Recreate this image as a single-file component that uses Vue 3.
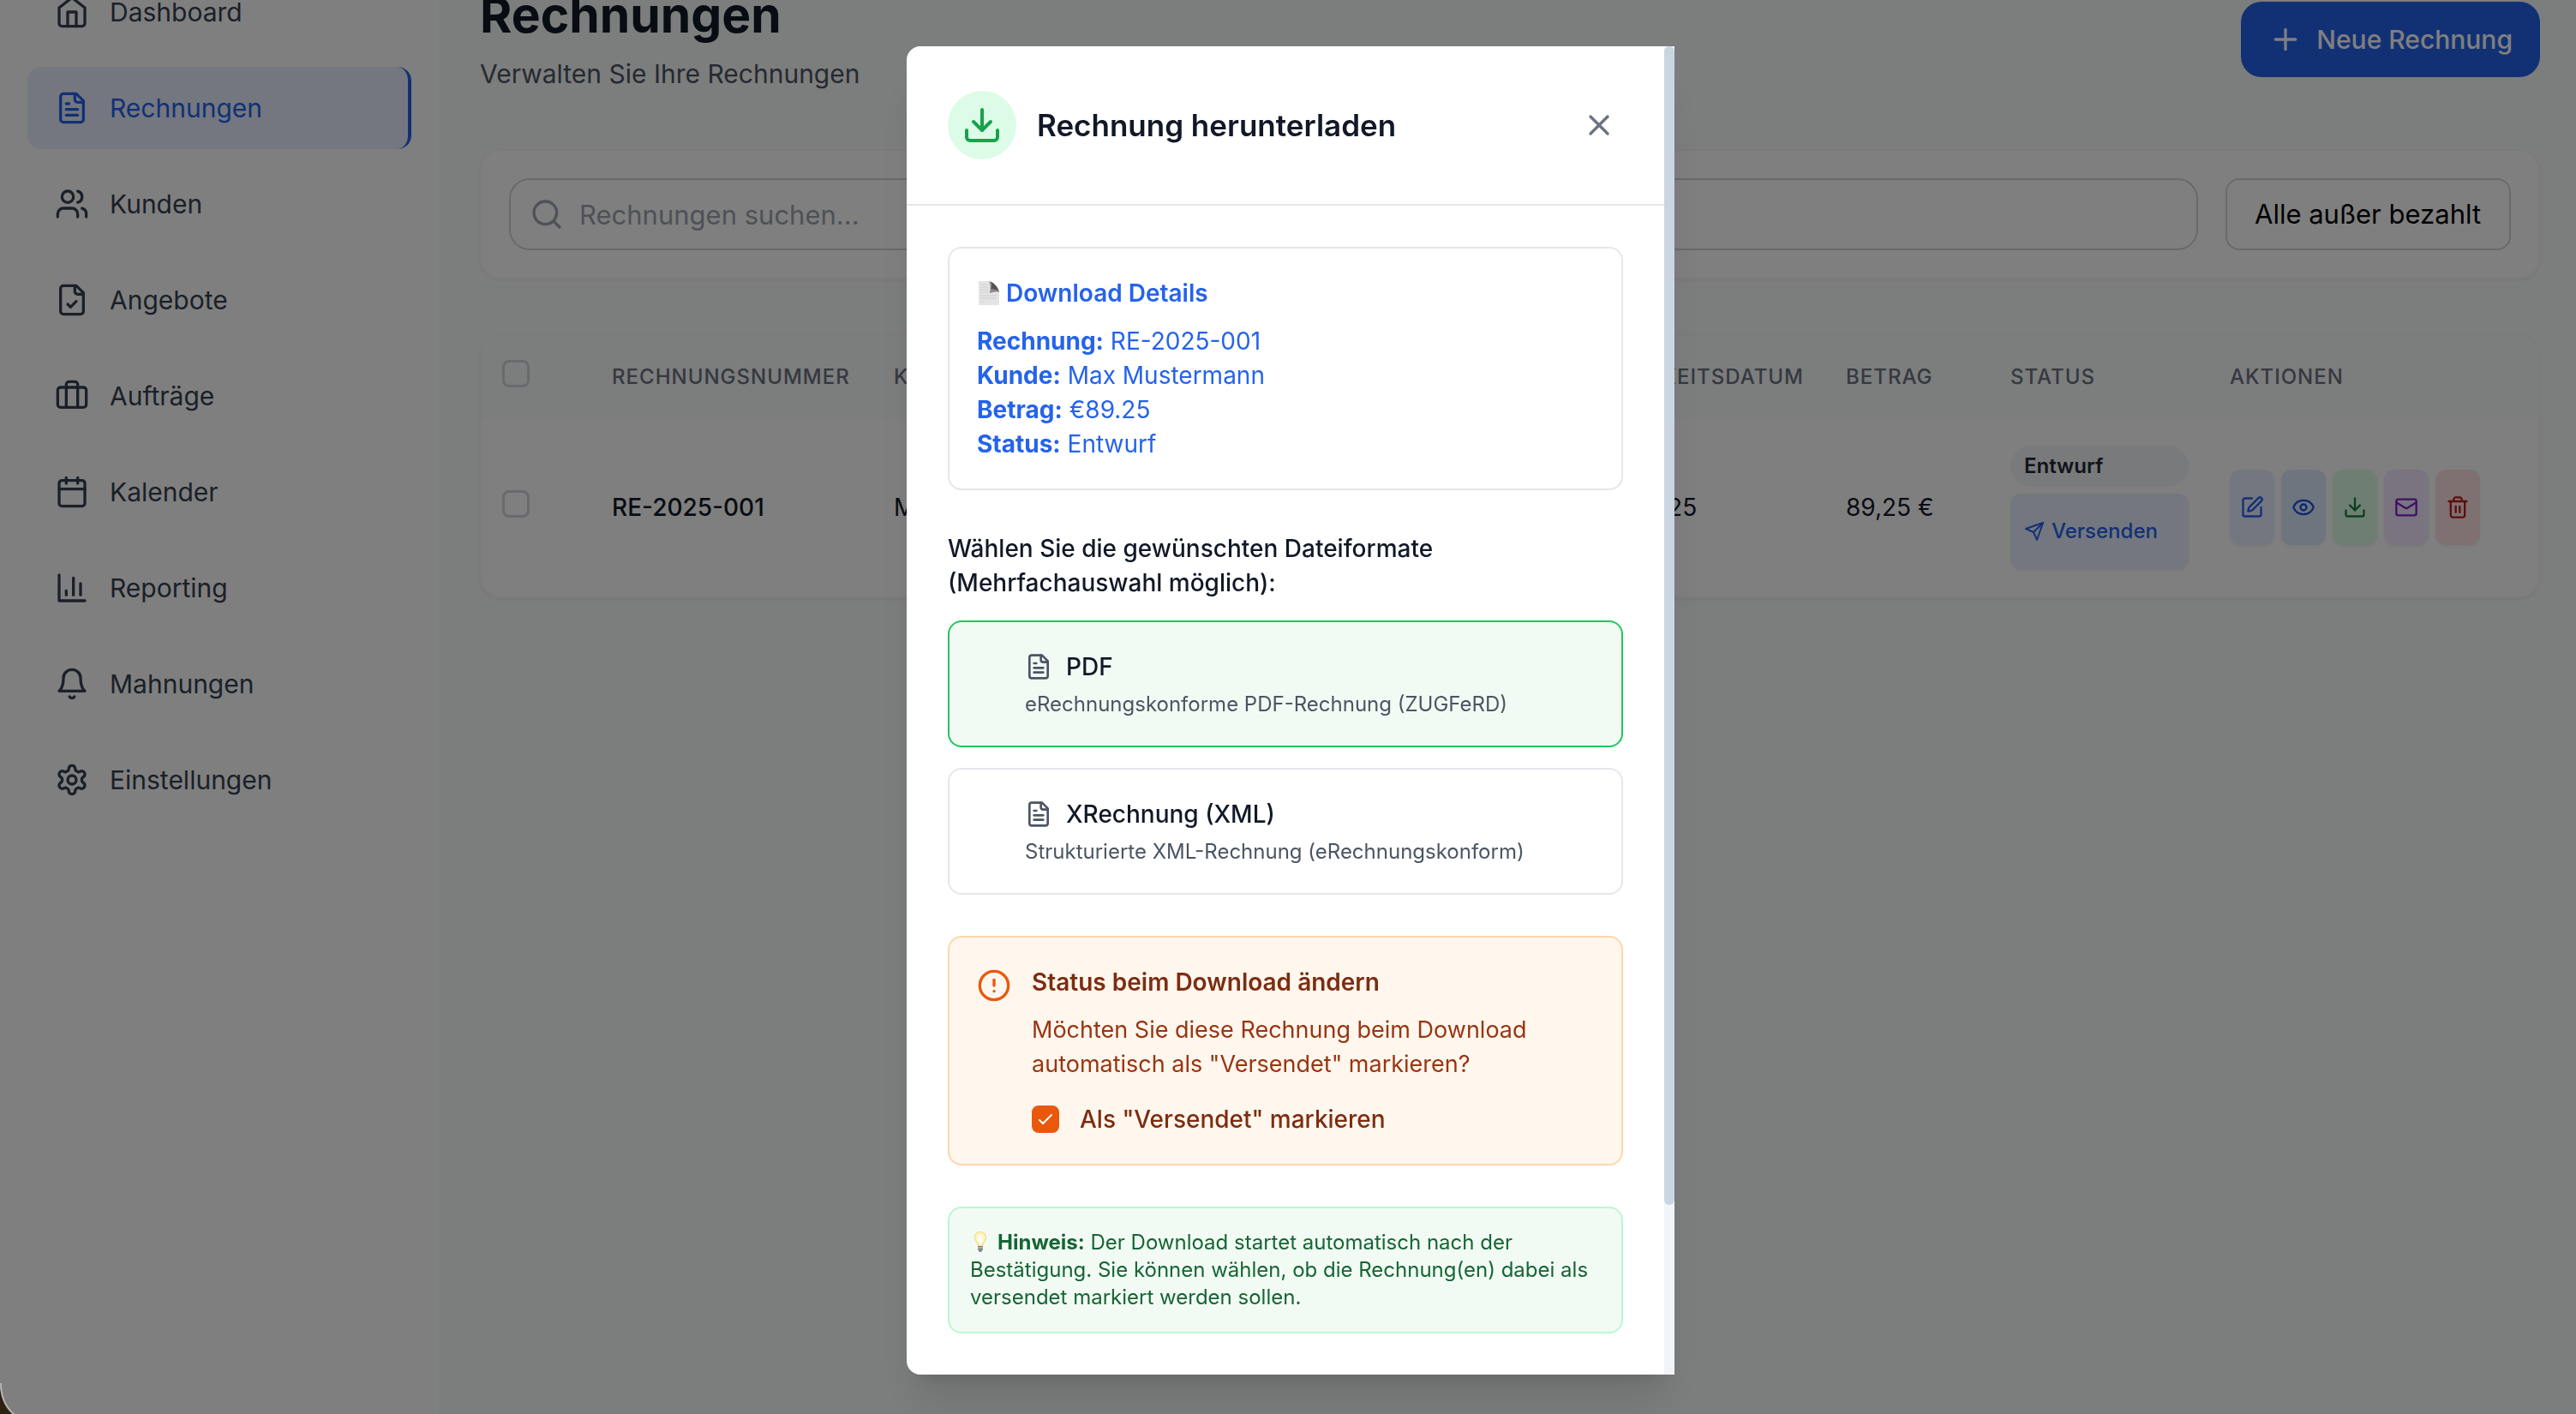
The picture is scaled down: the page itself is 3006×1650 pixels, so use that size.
<script setup>
import { h, ref } from 'vue'

const filePaths = [
  'M15 2H6a2 2 0 0 0-2 2v16a2 2 0 0 0 2 2h12a2 2 0 0 0 2-2V7Z',
  'M14 2v4a2 2 0 0 0 2 2h4',
]

const icons = {
  home: ['m3 9 9-7 9 7v11a2 2 0 0 1-2 2H5a2 2 0 0 1-2-2z', 'M9 22V12h6v10'],
  file: [...filePaths, 'M10 9H8', 'M16 13H8', 'M16 17H8'],
  users: [
    'M16 21v-2a4 4 0 0 0-4-4H6a4 4 0 0 0-4 4v2',
    'M5 7a4 4 0 1 0 8 0a4 4 0 1 0-8 0',
    'M22 21v-2a4 4 0 0 0-3-3.87',
    'M16 3.13a4 4 0 0 1 0 7.75',
  ],
  fileCheck: [...filePaths, 'm9 15 2 2 4-4'],
  briefcase: [
    'M16 20V4a2 2 0 0 0-2-2h-4a2 2 0 0 0-2 2v16',
    'M4 6h16a2 2 0 0 1 2 2v10a2 2 0 0 1-2 2H4a2 2 0 0 1-2-2V8a2 2 0 0 1 2-2z',
  ],
  calendar: [
    'M8 2v4',
    'M16 2v4',
    'M5 4h14a2 2 0 0 1 2 2v14a2 2 0 0 1-2 2H5a2 2 0 0 1-2-2V6a2 2 0 0 1 2-2z',
    'M3 10h18',
  ],
  chart: ['M3 3v18h18', 'M18 17V9', 'M13 17V5', 'M8 17v-3'],
  bell: ['M6 8a6 6 0 0 1 12 0c0 7 3 9 3 9H3s3-2 3-9', 'M10.3 21a1.94 1.94 0 0 0 3.4 0'],
  settings: [
    'M12.22 2h-.44a2 2 0 0 0-2 2v.18a2 2 0 0 1-1 1.73l-.43.25a2 2 0 0 1-2 0l-.15-.08a2 2 0 0 0-2.73.73l-.22.38a2 2 0 0 0 .73 2.73l.15.1a2 2 0 0 1 1 1.72v.51a2 2 0 0 1-1 1.74l-.15.09a2 2 0 0 0-.73 2.73l.22.38a2 2 0 0 0 2.73.73l.15-.08a2 2 0 0 1 2 0l.43.25a2 2 0 0 1 1 1.73V20a2 2 0 0 0 2 2h.44a2 2 0 0 0 2-2v-.18a2 2 0 0 1 1-1.73l.43-.25a2 2 0 0 1 2 0l.15.08a2 2 0 0 0 2.73-.73l.22-.39a2 2 0 0 0-.73-2.73l-.15-.08a2 2 0 0 1-1-1.74v-.5a2 2 0 0 1 1-1.74l.15-.09a2 2 0 0 0 .73-2.73l-.22-.38a2 2 0 0 0-2.73-.73l-.15.08a2 2 0 0 1-2 0l-.43-.25a2 2 0 0 1-1-1.73V4a2 2 0 0 0-2-2z',
    'M9 12a3 3 0 1 0 6 0a3 3 0 1 0-6 0',
  ],
  plus: ['M5 12h14', 'M12 5v14'],
  search: ['M3 11a8 8 0 1 0 16 0a8 8 0 1 0-16 0', 'm21 21-4.3-4.3'],
  send: ['m22 2-7 20-4-9-9-4Z', 'M22 2 11 13'],
  edit: [
    'M12 3H5a2 2 0 0 0-2 2v14a2 2 0 0 0 2 2h14a2 2 0 0 0 2-2v-7',
    'M18.375 2.625a1 1 0 0 1 3 3l-9.013 9.014a2 2 0 0 1-.853.505l-2.873.84a.5.5 0 0 1-.62-.62l.84-2.873a2 2 0 0 1 .506-.852z',
  ],
  eye: [
    'M2.062 12.348a1 1 0 0 1 0-.696 10.75 10.75 0 0 1 19.876 0 1 1 0 0 1 0 .696 10.75 10.75 0 0 1-19.876 0',
    'M9 12a3 3 0 1 0 6 0a3 3 0 1 0-6 0',
  ],
  download: ['M21 15v4a2 2 0 0 1-2 2H5a2 2 0 0 1-2-2v-4', 'm7 10 5 5 5-5', 'M12 15V3'],
  mail: [
    'M4 4h16a2 2 0 0 1 2 2v12a2 2 0 0 1-2 2H4a2 2 0 0 1-2-2V6a2 2 0 0 1 2-2z',
    'm22 7-8.97 5.7a1.94 1.94 0 0 1-2.06 0L2 7',
  ],
  trash: [
    'M3 6h18',
    'M19 6v14c0 1-1 2-2 2H7c-1 0-2-1-2-2V6',
    'M8 6V4c0-1 1-2 2-2h4c1 0 2 1 2 2v2',
    'M10 11v6',
    'M14 11v6',
  ],
  close: ['M18 6 6 18', 'm6 6 12 12'],
  alert: ['M2 12a10 10 0 1 0 20 0a10 10 0 1 0-20 0', 'M12 8v4', 'M12 16h.01'],
}

const Icon = (props) =>
  h(
    'svg',
    {
      viewBox: '0 0 24 24',
      fill: 'none',
      stroke: 'currentColor',
      'stroke-width': 2,
      'stroke-linecap': 'round',
      'stroke-linejoin': 'round',
      'aria-hidden': 'true',
    },
    icons[props.name].map((d) => h('path', { d })),
  )

const navItems = [
  { label: 'Dashboard', icon: 'home' },
  { label: 'Rechnungen', icon: 'file', active: true },
  { label: 'Kunden', icon: 'users' },
  { label: 'Angebote', icon: 'fileCheck' },
  { label: 'Aufträge', icon: 'briefcase' },
  { label: 'Kalender', icon: 'calendar' },
  { label: 'Reporting', icon: 'chart' },
  { label: 'Mahnungen', icon: 'bell' },
  { label: 'Einstellungen', icon: 'settings' },
]

const rowActions = [
  { label: 'Bearbeiten', icon: 'edit' },
  { label: 'Ansehen', icon: 'eye' },
  { label: 'Herunterladen', icon: 'download' },
  { label: 'E-Mail', icon: 'mail' },
  { label: 'Löschen', icon: 'trash' },
]

const details = [
  ['Rechnung:', 'RE-2025-001'],
  ['Kunde:', 'Max Mustermann'],
  ['Betrag:', '€89.25'],
  ['Status:', 'Entwurf'],
]

const formats = ref([
  { id: 'pdf', name: 'PDF', text: 'eRechnungskonforme PDF-Rechnung (ZUGFeRD)', checked: true },
  { id: 'xml', name: 'XRechnung (XML)', text: 'Strukturierte XML-Rechnung (eRechnungskonform)', checked: false },
])
const markSent = ref(true)
</script>

<template>
  <div class="shell">
    <aside class="sidebar">
      <nav class="nav" aria-label="Hauptmenü">
        <a
          v-for="item in navItems"
          :key="item.label"
          href="#"
          class="nav-item"
          :class="{ active: item.active }"
        >
          <Icon :name="item.icon" class="icon-40" />
          <span>{{ item.label }}</span>
        </a>
      </nav>
    </aside>

    <main class="main">
      <header class="page-head">
        <div>
          <h1>Rechnungen</h1>
          <p>Verwalten Sie Ihre Rechnungen</p>
        </div>
        <button type="button" class="new-button">
          <Icon name="plus" class="icon-40" />
          <span>Neue Rechnung</span>
        </button>
      </header>

      <section class="filters">
        <div class="search">
          <Icon name="search" class="icon-40 search-icon" />
          <input type="text" placeholder="Rechnungen suchen..." aria-label="Rechnungen suchen" />
        </div>
        <select class="status-filter" aria-label="Statusfilter">
          <option>Alle außer bezahlt</option>
        </select>
      </section>

      <section class="table-card">
        <table>
          <colgroup>
            <col class="col-check" />
            <col class="col-number" />
            <col class="col-customer" />
            <col class="col-date" />
            <col class="col-due" />
            <col class="col-amount" />
            <col class="col-status" />
            <col class="col-actions" />
          </colgroup>
          <thead>
            <tr>
              <th><input type="checkbox" class="row-check" aria-label="Alle auswählen" /></th>
              <th>Rechnungsnummer</th>
              <th>Kunde</th>
              <th>Datum</th>
              <th>Fälligkeitsdatum</th>
              <th>Betrag</th>
              <th>Status</th>
              <th>Aktionen</th>
            </tr>
          </thead>
          <tbody>
            <tr>
              <td><input type="checkbox" class="row-check" aria-label="RE-2025-001 auswählen" /></td>
              <td class="number">RE-2025-001</td>
              <td>Max Mustermann</td>
              <td>1.10.2025</td>
              <td>5.10.2025</td>
              <td>89,25 €</td>
              <td>
                <div class="status">
                  <span class="badge">Entwurf</span>
                  <button type="button" class="send-button">
                    <Icon name="send" class="icon-24" />
                    <span>Versenden</span>
                  </button>
                </div>
              </td>
              <td>
                <div class="actions">
                  <button
                    v-for="action in rowActions"
                    :key="action.icon"
                    type="button"
                    class="action"
                    :class="action.icon"
                    :aria-label="action.label"
                  >
                    <Icon :name="action.icon" class="icon-28" />
                  </button>
                </div>
              </td>
            </tr>
          </tbody>
        </table>
      </section>
    </main>
  </div>

  <div class="overlay">
    <div class="modal" role="dialog" aria-modal="true" aria-labelledby="modal-title">
      <div class="modal-content">
        <header class="modal-head">
          <span class="modal-icon"><Icon name="download" class="icon-48" /></span>
          <h2 id="modal-title">Rechnung herunterladen</h2>
          <button type="button" class="close" aria-label="Schließen">
            <Icon name="close" class="icon-40" />
          </button>
        </header>

        <div class="modal-body">
          <section class="details">
            <h3>
              <svg class="page-emoji" viewBox="0 0 24 28" aria-hidden="true">
                <path d="M0 0h13l11 13v15H0z" fill="#e4e4e4" />
                <path d="M2 4h9M2 7h9M2 10h10M2 13h12M2 17h19M2 20h19M2 24h5" stroke="#d0d0d0" />
                <path d="M12 0c3 2 3 5 2 9c4-1 8 0 10 4c-3-1-8 0-11 1c1-5 1-10-1-14z" fill="#8a8a8a" />
                <path d="M13 0c5 2 10 7 11 13c-2-3-6-4-10-4c1-4 1-7-1-9z" fill="#555" />
              </svg>
              <span>Download Details</span>
            </h3>
            <p v-for="[label, value] in details" :key="label">
              <strong>{{ label }}</strong> {{ value }}
            </p>
          </section>

          <fieldset class="formats">
            <legend>Wählen Sie die gewünschten Dateiformate (Mehrfachauswahl möglich):</legend>
            <label
              v-for="format in formats"
              :key="format.id"
              class="format"
              :class="{ selected: format.checked }"
            >
              <input v-model="format.checked" type="checkbox" class="format-check" />
              <span class="format-text">
                <span class="format-name">
                  <Icon name="file" class="icon-32" />
                  <span>{{ format.name }}</span>
                </span>
                <span class="format-info">{{ format.text }}</span>
              </span>
            </label>
          </fieldset>

          <section class="notice">
            <Icon name="alert" class="icon-40 notice-icon" />
            <div class="notice-text">
              <h3>Status beim Download ändern</h3>
              <p>Möchten Sie diese Rechnung beim Download automatisch als "Versendet" markieren?</p>
              <label>
                <span class="tick">
                  <input v-model="markSent" type="checkbox" />
                  <svg viewBox="0 0 32 32" aria-hidden="true">
                    <path d="M9 17l4 4 10-10" />
                  </svg>
                </span>
                <span>Als "Versendet" markieren</span>
              </label>
            </div>
          </section>

          <p class="hint">
            <svg class="bulb" viewBox="0 0 24 24" aria-hidden="true">
              <path d="M12 0c-4 0-7 3-7 7c0 4 3 5 4 10h6c1-5 4-6 4-10c0-4-3-7-7-7z" fill="#f3d98a" />
              <path d="M12 1c-3 0-6 3-6 6c0 3 3 5 4 9h4c1-4 4-6 4-9c0-3-3-6-6-6z" fill="#fff3bf" />
              <path d="M12 4c-2 0-3 2-3 4c0 2 1 4 2 6h2c1-2 2-4 2-6c0-2-1-4-3-4z" fill="#fffdf2" />
              <path d="M9 17h6v4l-2 3h-2l-2-3z" fill="#85858a" />
              <path d="M9 19h6" stroke="#cfcfd2" />
            </svg>
            <strong>Hinweis:</strong> Der Download startet automatisch nach der Bestätigung. Sie
            können wählen, ob die Rechnung(en) dabei als versendet markiert werden sollen.
          </p>
        </div>
      </div>
      <div class="scroll-track" aria-hidden="true"><div class="scroll-thumb"></div></div>
    </div>
  </div>

  <svg class="window-corner" viewBox="0 0 20 36" aria-hidden="true">
    <path d="M0 0C0 16 6 28 17 36H0z" fill="#2c2410" />
    <path d="M1 0C1 16 6 28 17 37" fill="none" stroke="#b4b4b4" stroke-width="2" />
  </svg>
</template>

<style>
html,
body {
  margin: 0;
  background: #f9fbfa;
  overflow: hidden;
}
</style>

<style scoped>
.shell,
.overlay {
  font-family: Inter, "Liberation Sans", sans-serif;
  font-size: 28px;
  line-height: 40px;
  color: #111827;
}

.shell *,
.overlay * {
  box-sizing: border-box;
}

.shell {
  display: flex;
  min-height: 100vh;
  background: #f9fbfa;
}

h1,
h2,
h3,
p {
  margin: 0;
}

button,
input,
select {
  font: inherit;
  color: inherit;
  margin: 0;
}

button {
  border: 0;
  padding: 0;
  display: flex;
  align-items: center;
}

svg {
  flex: none;
}

.icon-24 {
  width: 24px;
  height: 24px;
}

.icon-28 {
  width: 28px;
  height: 28px;
}

.icon-32 {
  width: 32px;
  height: 32px;
}

.icon-40 {
  width: 40px;
  height: 40px;
}

.icon-48 {
  width: 48px;
  height: 48px;
}

/* Sidebar */
.sidebar {
  flex: none;
  width: 512px;
  padding: 0 32px;
  background: #fff;
}

.nav {
  display: flex;
  flex-direction: column;
  gap: 16px;
  margin-top: -34px;
}

.nav-item {
  display: flex;
  align-items: center;
  gap: 24px;
  height: 96px;
  padding: 0 32px;
  border-radius: 16px;
  color: #374151;
  font-size: 30px;
  text-decoration: none;
}

.nav-item.active {
  color: #2563eb;
  background: #e8eeff;
  border-right: 4px solid #2563eb;
}

/* Page */
.main {
  flex: 1;
  min-width: 0;
  padding: 0 42px 0 48px;
}

.page-head {
  display: flex;
  justify-content: space-between;
  align-items: flex-start;
  height: 174px;
}

.page-head h1 {
  margin-top: -18px;
  font-size: 57px;
  line-height: 72px;
  font-weight: 700;
}

.page-head p {
  margin-top: 8px;
  font-size: 30px;
  line-height: 48px;
  color: #4b5563;
}

.new-button {
  gap: 16px;
  height: 88px;
  margin-top: 2px;
  padding: 0 32px;
  border-radius: 24px;
  background: #2563eb;
  color: #fff;
  font-size: 30px;
  font-weight: 500;
}

.filters {
  display: flex;
  gap: 32px;
  padding: 32px;
  background: #fff;
  border: 2px solid #f6f7f8;
  border-radius: 24px;
  box-shadow: 0 2px 4px rgba(0, 0, 0, 0.05);
}

.search {
  position: relative;
  flex: 1;
}

.search-icon {
  position: absolute;
  left: 24px;
  top: 22px;
  color: #9ca3af;
}

.search input {
  display: block;
  width: 100%;
  height: 84px;
  padding: 0 32px 0 80px;
  border: 2px solid #d1d5db;
  border-radius: 24px;
  background: #fff;
  font-size: 31px;
}

.search input::placeholder {
  color: #9ca3af;
  opacity: 1;
}

.status-filter {
  appearance: none;
  height: 84px;
  padding: 0 32px;
  border: 2px solid #d1d5db;
  border-radius: 16px;
  background: #fff;
  color: #000;
  font-size: 31px;
}

.table-card {
  margin-top: 64px;
  border: 2px solid #f6f7f8;
  border-radius: 24px;
  background: #fff;
  box-shadow: 0 2px 4px rgba(0, 0, 0, 0.05);
  overflow: hidden;
}

table {
  width: 100%;
  table-layout: fixed;
  border-collapse: collapse;
}

.col-check {
  width: 128px;
}

.col-number {
  width: 329px;
}

.col-date {
  width: 300px;
}

.col-due {
  width: 301px;
}

.col-amount {
  width: 192px;
}

.col-status {
  width: 256px;
}

.col-actions {
  width: 384px;
}

th,
td {
  padding: 0 24px;
  text-align: left;
  white-space: nowrap;
}

th {
  height: 96px;
  background: #f9fbfa;
  color: #6b7280;
  font-size: 24px;
  font-weight: 500;
  letter-spacing: 1px;
  text-transform: uppercase;
}

td {
  height: 208px;
}

.number {
  font-weight: 500;
}

.row-check {
  appearance: none;
  display: block;
  width: 32px;
  height: 32px;
  margin-bottom: 8px;
  border: 3px solid #d1d5db;
  border-radius: 8px;
  background: transparent;
}

.status {
  display: flex;
  flex-direction: column;
  gap: 8px;
}

.badge {
  padding: 0 16px;
  border-radius: 24px;
  background: #f3f4f6;
  color: #1f2937;
  font-size: 24px;
  line-height: 48px;
  font-weight: 600;
}

.send-button {
  gap: 8px;
  height: 88px;
  padding: 0 16px;
  border-radius: 12px;
  background: #e8eeff;
  color: #2563eb;
  font-size: 24px;
  font-weight: 500;
  box-shadow: 0 2px 4px rgba(0, 0, 0, 0.05);
}

.actions {
  display: flex;
  gap: 8px;
}

.action {
  height: 88px;
  padding: 0 12px;
  border-radius: 12px;
  box-shadow: 0 2px 4px rgba(0, 0, 0, 0.05);
}

.action.edit {
  color: #2563eb;
  background: #e8eeff;
}

.action.eye {
  color: #1d4ed8;
  background: #dbeafe;
}

.action.download {
  color: #15803d;
  background: #dcfce7;
}

.action.mail {
  color: #7e22ce;
  background: #f3e8ff;
}

.action.trash {
  color: #b91c1c;
  background: #fee2e2;
}

/* Dialog */
.overlay {
  position: fixed;
  inset: 0 -6px 0 0;
  display: flex;
  justify-content: center;
  align-items: flex-start;
  padding-top: 54px;
  background: rgba(0, 0, 0, 0.5);
}

.modal {
  display: flex;
  width: 896px;
  border-radius: 16px 0 0 16px;
  background: #fff;
  box-shadow: 0 40px 50px -10px rgba(0, 0, 0, 0.1), 0 16px 20px -12px rgba(0, 0, 0, 0.1);
}

.modal-content {
  flex: 1;
  min-width: 0;
}

.scroll-track {
  width: 12px;
  background: #f1f5f9;
}

.scroll-thumb {
  height: calc(100% - 198px);
  border-radius: 6px;
  background: #cbd5e1;
}

.modal-head {
  display: flex;
  align-items: center;
  gap: 24px;
  padding: 48px;
  border-bottom: 2px solid #e5e7eb;
}

.modal-icon {
  display: grid;
  place-items: center;
  width: 80px;
  height: 80px;
  border-radius: 50%;
  background: #dcfce7;
  color: #16a34a;
}

.modal-head h2 {
  flex: 1;
  font-size: 35px;
  line-height: 56px;
  font-weight: 600;
}

.close {
  height: 88px;
  padding: 0 8px;
  background: none;
  color: #6b7280;
}

.modal-body {
  display: flex;
  flex-direction: column;
  gap: 48px;
  padding: 48px;
}

.details {
  padding: 32px;
  border: 2px solid #e5e7eb;
  border-radius: 16px;
  color: #2563eb;
}

.details h3 {
  display: flex;
  align-items: center;
  gap: 8px;
  margin-bottom: 16px;
  font-size: 28px;
  font-weight: 600;
}

.page-emoji {
  width: 24px;
  height: 28px;
  margin-left: 2px;
}

.formats {
  display: flex;
  flex-direction: column;
  gap: 24px;
  min-width: 0;
  margin: 0;
  padding: 0;
  border: 0;
}

.formats legend {
  margin-bottom: 24px;
  padding: 0;
  font-weight: 500;
}

.format {
  display: flex;
  align-items: flex-start;
  gap: 24px;
  padding: 32px;
  border: 2px solid #e5e7eb;
  border-radius: 16px;
}

.format.selected {
  border-color: #22c55e;
  background: #f1fbf4;
}

.format-check {
  appearance: none;
  width: 32px;
  height: 32px;
}

.format-text {
  display: flex;
  flex-direction: column;
  gap: 8px;
}

.format-name {
  display: flex;
  align-items: center;
  gap: 16px;
  font-weight: 500;
}

.format-name svg {
  color: #4b5563;
}

.format-info {
  color: #4b5563;
  font-size: 24px;
  line-height: 32px;
}

.notice {
  display: flex;
  align-items: flex-start;
  gap: 24px;
  padding: 32px;
  border: 2px solid #fed7aa;
  border-radius: 16px;
  background: #fff7ed;
  color: #7c2d12;
}

.notice-icon {
  margin-top: 4px;
  color: #ea580c;
}

.notice h3 {
  font-size: 28px;
  font-weight: 600;
}

.notice p {
  margin: 16px 0 24px;
  color: #9a3412;
  font-size: 27px;
}

.notice label {
  display: flex;
  align-items: center;
  gap: 24px;
  font-weight: 500;
}

.tick {
  display: grid;
}

.tick input,
.tick svg {
  grid-area: 1 / 1;
  width: 32px;
  height: 32px;
}

.tick input {
  appearance: none;
  border: 2px solid #ea580c;
  border-radius: 8px;
  background: #fff;
}

.tick input:checked {
  background: #ea580c;
}

.tick svg {
  fill: none;
  stroke: #fff;
  stroke-width: 2;
  stroke-linecap: round;
  stroke-linejoin: round;
  pointer-events: none;
}

.hint {
  padding: 24px;
  border: 2px solid #bbf7d0;
  border-radius: 16px;
  background: #f1fbf4;
  color: #166534;
  font-size: 24px;
  line-height: 32px;
}

.bulb {
  width: 24px;
  height: 24px;
  margin-right: 8px;
  vertical-align: -3px;
}

.window-corner {
  position: fixed;
  left: 0;
  bottom: 0;
  width: 20px;
  height: 36px;
}
</style>
